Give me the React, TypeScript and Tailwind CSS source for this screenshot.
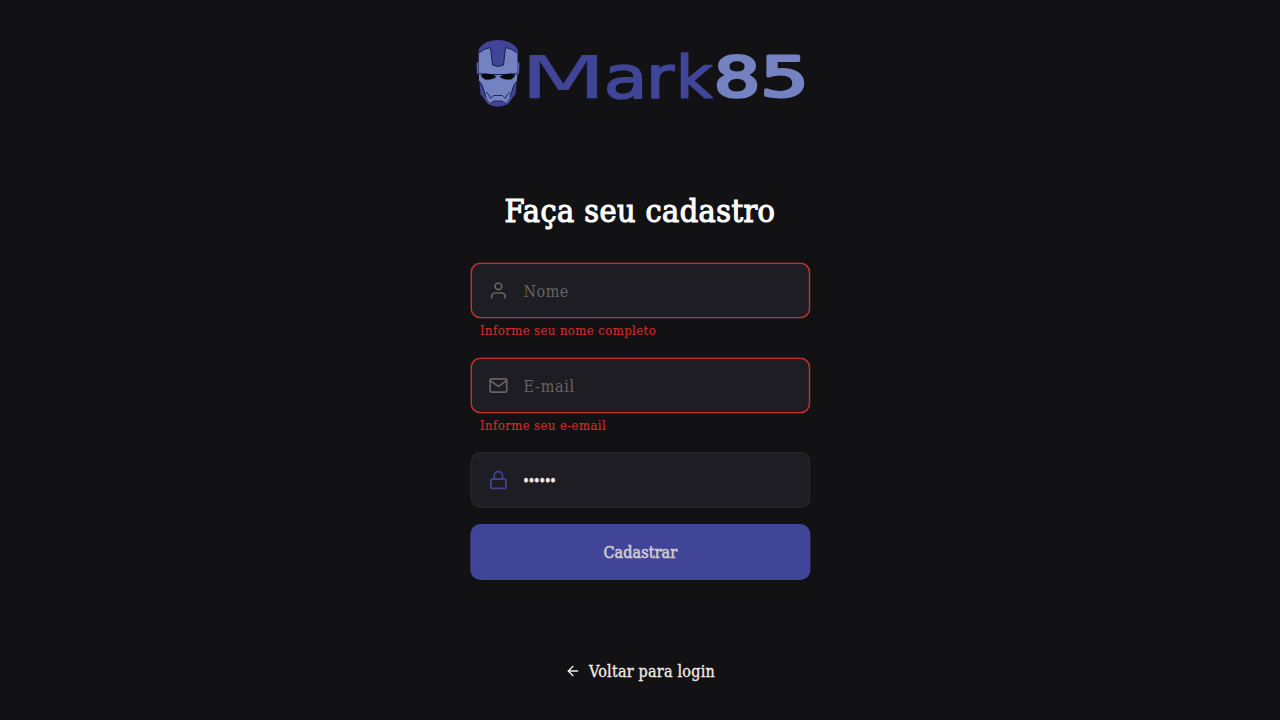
import React from "react";
import { FiArrowLeft, FiLock, FiMail, FiUser } from "react-icons/fi";

const slab = "font-['Roboto_Slab','DejaVu_Serif_Condensed','DejaVu_Serif',serif] [font-stretch:condensed]";
const field = "flex h-14 translate-x-[0.4px] items-center rounded-[10px] bg-[#1e1d23] px-[18px]";
const invalid = "translate-y-[0.5px] text-[#666360] shadow-[inset_0_0_0_1.6px_#c53030]";
const input = "relative top-px ml-[15.6px] w-[260px] bg-transparent text-base outline-none placeholder:text-[#666360] placeholder:opacity-100";
const error = "ml-[10px] h-[39px] whitespace-nowrap pt-[3px] text-[13px] leading-5 tracking-[0.41px] text-[#d02b2b] [-webkit-text-stroke:0.15px]";

function Logo() {
  return (
    <svg width="340" height="76" viewBox="470 36 340 76" role="img" aria-label="Mark85">
      <path d="M478.500 51Q479 46 487 42Q498 38 509 42Q517 46 518 51V72L515.500 94L508 104Q498 109.500 488 104L480.500 94L478.500 72Z" fill="#414598" />
      <path d="M476.500 63l2-1v12h-1.500zM519.500 63l-2-1v12h1.500z" fill="#5660ac" />
      <path d="M479 53Q484 48.500 490.500 47.500L492.500 65Q498 68 503.500 65L505.500 47.500Q512 48.500 517 53V81L514 85L510 97L506 103.500L502 101H494L490 103.500L486 97L482 85L479 81Z" fill="#7482c1" />
      <path d="M479 53Q484 48.500 490.500 47.500L492.500 65Q498 68 503.500 65L505.500 47.500Q512 48.500 517 53M479 73.500L489 74.500H507L517 73.500M479 81L482 85L486 97M517 81L514 85L510 97" fill="none" stroke="#18204a" />
      <path d="M481 75L485 73.800Q492 74 496 76.500L494.500 78L490 79.300H485L482 77ZM515 75L511 73.800Q504 74 500 76.500L501.500 78L506 79.300H511L514 77Z" fill="#08090c" stroke="#08090c" strokeWidth=".5" />
      <path d="M486 92L489 95L490.500 98.500L493.500 95.500H502.500L505.500 98.500L507 95L510 92M490 103.500L494 101H502L506 103.500" fill="none" stroke="#202a52" />
      <g fontFamily="DejaVu Sans, sans-serif" strokeLinejoin="round">
        <text y="97.500" fontSize="59" fill="#414598" stroke="#414598" strokeWidth="1.600">
          <tspan x="520" textLength="86.700" lengthAdjust="spacingAndGlyphs" strokeWidth=".3">M</tspan>
          <tspan x="603.700" textLength="43.800" lengthAdjust="spacingAndGlyphs">a</tspan>
          <tspan x="646" textLength="28" lengthAdjust="spacingAndGlyphs">r</tspan>
          <tspan x="676" textLength="36.600" lengthAdjust="spacingAndGlyphs">k</tspan>
        </text>
        <text y="96.400" fontSize="56" fill="#7482c1" stroke="#7482c1" strokeWidth="3">
          <tspan x="714" textLength="46" lengthAdjust="spacingAndGlyphs">8</tspan>
          <tspan x="760.500" textLength="48" lengthAdjust="spacingAndGlyphs">5</tspan>
        </text>
      </g>
    </svg>
  );
}

export default function App() {
  return (
    <main className={`flex h-[720px] w-full flex-col items-center bg-[#121214] text-[#f4ede8] ${slab}`}>
      <header className="mt-9 h-[76px]"><Logo /></header>
      <form className="mt-[74px] flex w-[340px] flex-col" onSubmit={(e) => e.preventDefault()}>
        <h1 className="h-[48px] whitespace-nowrap pt-px text-center text-[32px] leading-[48px] tracking-[0.45px] text-white [-webkit-text-stroke:1.1px]">Faça seu cadastro</h1>
        <label className={`${field} ${invalid} mt-7`}>
          <FiUser size={20} className="-ml-[0.4px]" />
          <input className={`${input} tracking-[0.4px]`} placeholder="Nome" />
        </label>
        <p className={error}>Informe seu nome completo</p>
        <label className={`${field} ${invalid}`}>
          <FiMail size={20} className="-ml-[0.4px]" />
          <input className={`${input} tracking-[0.7px]`} placeholder="E-mail" />
        </label>
        <p className={error}>Informe seu e-email</p>
        <label className={`${field} text-[#414598] shadow-[inset_0_0_0_1.6px_#25242c]`}>
          <FiLock size={20} className="-ml-[0.4px]" />
          <input className={`${input} -indent-px text-[14px] tracking-[-2px] text-[#f4ede8] [-webkit-text-stroke:0.3px]`} type="password" defaultValue="123456" />
        </label>
        <button className="mt-4 h-14 translate-x-[0.4px] rounded-[10px] bg-[#414598] pt-px text-base tracking-[0.1px] text-[#cfcbd0] [-webkit-text-stroke:0.6px]">Cadastrar</button>
      </form>
      <a className="mt-[79px] flex items-center text-base leading-6 tracking-[0.22px]" href="#login">
        <FiArrowLeft size={16} className="mb-[2px] mr-2" />
        <span className="pt-px [-webkit-text-stroke:0.3px]">Voltar para login</span>
      </a>
    </main>
  );
}
